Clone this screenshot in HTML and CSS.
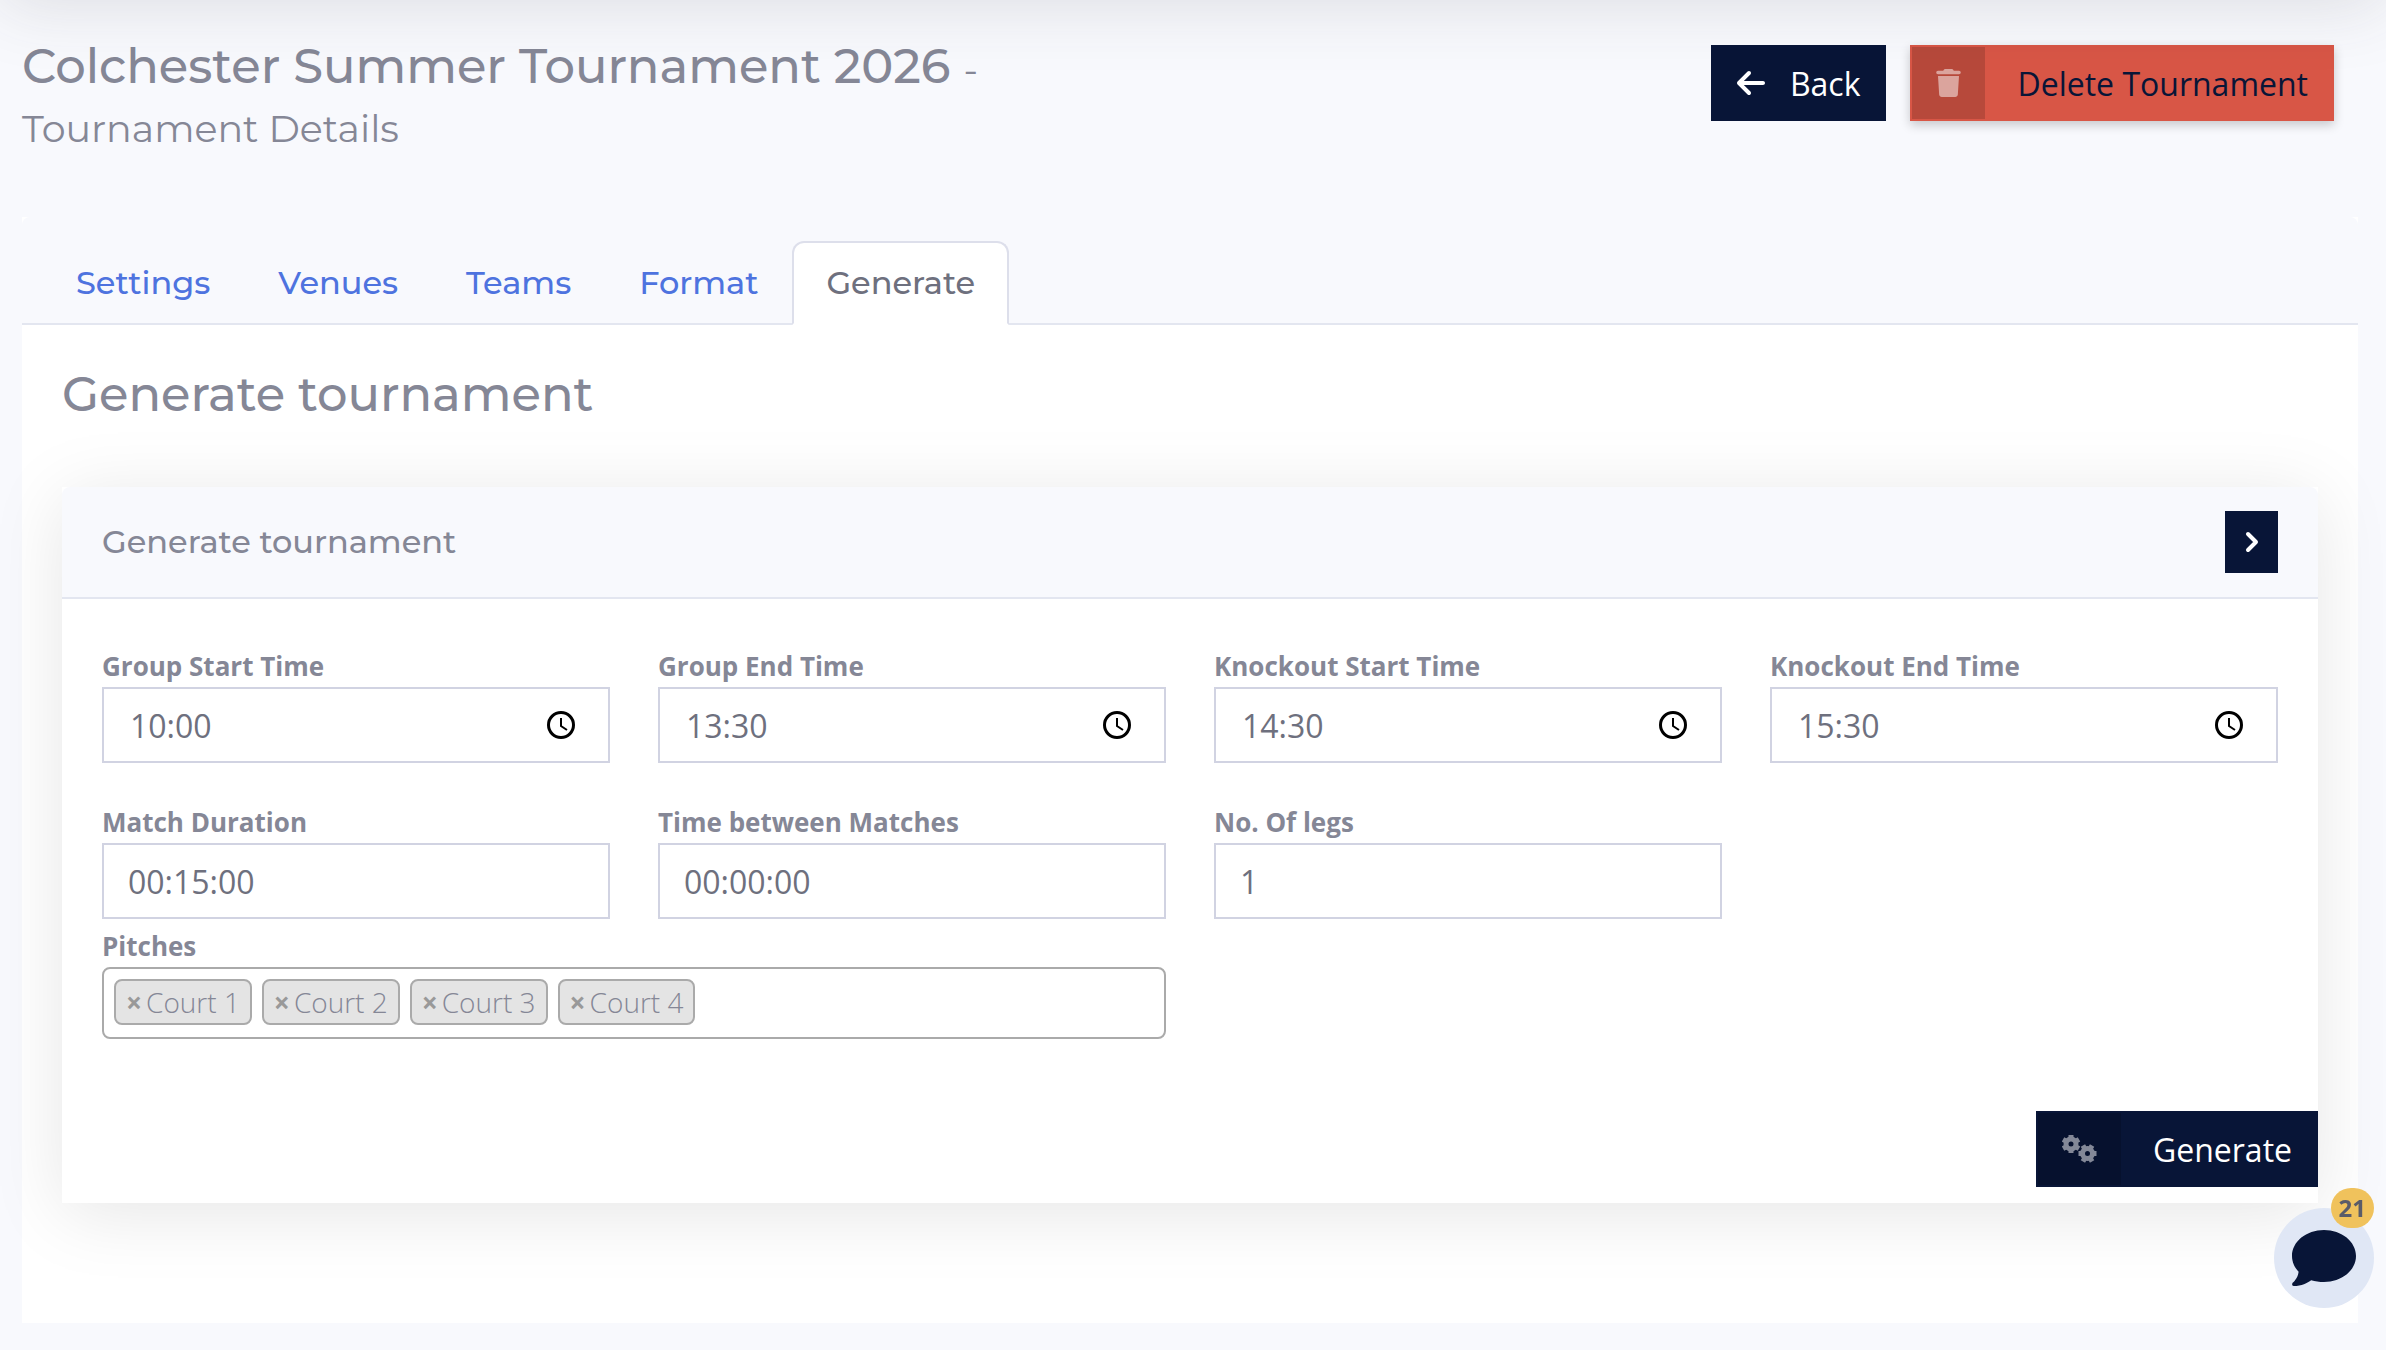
FILE: index.html
```html
<!DOCTYPE html>
<html lang="en">
<head>
  <meta charset="UTF-8">
  <meta name="viewport" content="width=device-width, initial-scale=1.0">
  <title>Tournament Details</title>
  <link rel="stylesheet" href="styles.css">
</head>
<body>
  <div class="topbar"></div>

  <header class="page-header">
    <div class="page-title">
      <h1>Colchester Summer Tournament 2026 <small>-</small></h1>
      <p>Tournament Details</p>
    </div>
    <div class="page-actions">
      <a href="#" class="btn btn-back">
        <svg viewBox="0 0 448 512" width="28" height="32" fill="currentColor"><path d="M9.400 233.400c-12.500 12.500-12.500 32.800 0 45.300l160 160c12.500 12.500 32.800 12.500 45.300 0s12.500-32.800 0-45.300L109.200 288 416 288c17.700 0 32-14.300 32-32s-14.300-32-32-32l-306.700 0L214.600 118.600c12.500-12.500 12.500-32.800 0-45.300s-32.800-12.500-45.300 0l-160 160z"/></svg>
        <span>Back</span>
      </a>
      <button type="button" class="btn btn-danger">
        <span class="btn-icon"><svg viewBox="0 0 448 512" width="25" height="28" fill="currentColor"><path d="M135.200 17.700C140.600 6.800 151.700 0 163.800 0L284.200 0c12.100 0 23.200 6.800 28.600 17.700L320 32l96 0c17.700 0 32 14.300 32 32s-14.300 32-32 32L32 96C14.300 96 0 81.700 0 64S14.300 32 32 32l96 0 7.200-14.300zM32 128l384 0L394.800 467c-1.600 25.300-22.600 45-47.900 45L101.100 512c-25.300 0-46.300-19.700-47.900-45L32 128z"/></svg></span>
        <span class="btn-text">Delete Tournament</span>
      </button>
    </div>
  </header>

  <main class="panel">
    <nav class="tabs">
      <a href="#" class="tab">Settings</a>
      <a href="#" class="tab">Venues</a>
      <a href="#" class="tab">Teams</a>
      <a href="#" class="tab">Format</a>
      <a href="#" class="tab active">Generate</a>
    </nav>

    <div class="panel-body">
      <h2>Generate tournament</h2>

      <form class="card">
        <div class="card-header">
          <h3>Generate tournament</h3>
          <button type="button" class="btn-next" aria-label="Next">
            <svg viewBox="0 0 16 24" width="16" height="24" fill="none" stroke="currentColor" stroke-width="4" stroke-linecap="round" stroke-linejoin="round"><path d="M4 4l8 8-8 8"/></svg>
          </button>
        </div>

        <div class="fields">
          <div class="field">
            <label for="groupStart">Group Start Time</label>
            <div class="control control-time">
              <input type="text" id="groupStart" value="10:00">
              <button type="button" class="clock" aria-label="Pick time"><svg viewBox="0 0 30 30" width="30" height="30" fill="none" stroke="currentColor"><circle cx="15" cy="15" r="12.500" stroke-width="3"/><path d="M15 8v8l6 4" stroke-width="2"/></svg></button>
            </div>
          </div>
          <div class="field">
            <label for="groupEnd">Group End Time</label>
            <div class="control control-time">
              <input type="text" id="groupEnd" value="13:30">
              <button type="button" class="clock" aria-label="Pick time"><svg viewBox="0 0 30 30" width="30" height="30" fill="none" stroke="currentColor"><circle cx="15" cy="15" r="12.500" stroke-width="3"/><path d="M15 8v8l6 4" stroke-width="2"/></svg></button>
            </div>
          </div>
          <div class="field">
            <label for="knockoutStart">Knockout Start Time</label>
            <div class="control control-time">
              <input type="text" id="knockoutStart" value="14:30">
              <button type="button" class="clock" aria-label="Pick time"><svg viewBox="0 0 30 30" width="30" height="30" fill="none" stroke="currentColor"><circle cx="15" cy="15" r="12.500" stroke-width="3"/><path d="M15 8v8l6 4" stroke-width="2"/></svg></button>
            </div>
          </div>
          <div class="field">
            <label for="knockoutEnd">Knockout End Time</label>
            <div class="control control-time">
              <input type="text" id="knockoutEnd" value="15:30">
              <button type="button" class="clock" aria-label="Pick time"><svg viewBox="0 0 30 30" width="30" height="30" fill="none" stroke="currentColor"><circle cx="15" cy="15" r="12.500" stroke-width="3"/><path d="M15 8v8l6 4" stroke-width="2"/></svg></button>
            </div>
          </div>
          <div class="field">
            <label for="duration">Match Duration</label>
            <div class="control"><input type="text" id="duration" value="00:15:00"></div>
          </div>
          <div class="field">
            <label for="between">Time between Matches</label>
            <div class="control"><input type="text" id="between" value="00:00:00"></div>
          </div>
          <div class="field">
            <label for="legs">No. Of legs</label>
            <div class="control"><input type="text" id="legs" value="1"></div>
          </div>
          <div class="field field-pitches">
            <label for="pitches">Pitches</label>
            <div class="pitches">
              <span class="chip"><button type="button" aria-label="Remove Court 1">×</button>Court 1</span>
              <span class="chip"><button type="button" aria-label="Remove Court 2">×</button>Court 2</span>
              <span class="chip"><button type="button" aria-label="Remove Court 3">×</button>Court 3</span>
              <span class="chip"><button type="button" aria-label="Remove Court 4">×</button>Court 4</span>
              <input type="text" id="pitches">
            </div>
          </div>
        </div>

        <div class="card-footer">
          <button type="submit" class="btn btn-generate">
            <span class="btn-icon"><svg viewBox="0 0 35 28" width="35" height="28" fill="none" stroke="currentColor">
              <g transform="translate(9 9)"><circle r="5" stroke-width="5"/><path d="M0-6v-3M0 6v3M5.200-3l2.800-1.600M5.200 3l2.800 1.600M-5.200-3l-2.800-1.600M-5.200 3l-2.800 1.600" stroke-width="5"/></g>
              <g transform="translate(25.500 18.500)"><circle r="5" stroke-width="5"/><path d="M-6 0h-3M6 0h3M-3 5.200l-1.600 2.800M3 5.200l1.600 2.800M-3-5.200l-1.600-2.800M3-5.200l1.600-2.800" stroke-width="5"/></g>
            </svg></span>
            <span class="btn-text">Generate</span>
          </button>
        </div>
      </form>
    </div>
  </main>

  <button type="button" class="chat" aria-label="Open chat">
    <svg viewBox="0 0 512 448" width="64" height="56" fill="currentColor"><path d="M256 0C114.600 0 0 93.100 0 208c0 47.600 19.900 91.200 52.900 126.300C48 386 9.600 420 4 424c-5 8-5 24 10 24 62 0 110-26 139.300-46.600C184.700 411.200 219.600 416 256 416c141.400 0 256-93.100 256-208S397.400 0 256 0z"/></svg>
    <span class="chat-badge">21</span>
  </button>
</body>
</html>
```
FILE: styles.css
```css
* {
  box-sizing: border-box;
}
body {
  margin: 0;
  min-height: 100vh;
  padding: 32px 28px 26px 22px;
  background-color: #f8f9fd;
  color: #858796;
  font-family: "Open Sans", sans-serif;
  font-size: 32px;
  position: relative;
  overflow-x: hidden;
}
h1, h2, h3, p {
  margin: 0;
}
h1, h2, h3, .page-title, .tab {
  font-family: Montserrat, Inter, sans-serif;
  font-weight: 500;
}
button, input {
  font: inherit;
  color: inherit;
}
button {
  border: 0;
  padding: 0;
  background: none;
  cursor: pointer;
}
svg {
  display: block;
}

/* shadow of the bar above the page */
.topbar {
  position: absolute;
  top: -100px;
  left: 0;
  right: 0;
  height: 100px;
  box-shadow: 0 4px 70px rgba(58, 59, 69, 0.15);
}

.page-header {
  display: flex;
  justify-content: space-between;
  align-items: flex-start;
  height: 185px;
}
h1 {
  font-size: 48px;
  line-height: 68px;
}
h1 small {
  font-size: 38px;
  font-weight: 400;
}
.page-title p {
  font-size: 38px;
  font-weight: 400;
  line-height: 50px;
}
.page-actions {
  display: flex;
  gap: 24px;
  padding: 13px 24px 0 0;
}

.btn {
  display: flex;
  align-items: center;
  height: 76px;
  padding: 2px;
  background-color: #081537;
  color: #fff;
  font-size: 32px;
  text-decoration: none;
}
.btn-back {
  gap: 25px;
  padding: 0 26px;
}
.btn-icon {
  display: flex;
  align-items: center;
  align-self: stretch;
  padding: 0 24px;
  background-color: rgba(0, 0, 0, 0.15);
}
.btn-icon svg {
  opacity: 0.5;
}
.btn-text {
  padding: 0 24px 0 32px;
}
.btn-danger {
  background-color: #d85646;
  color: #081537;
  box-shadow: 0 4px 10px rgba(0, 0, 0, 0.2);
}
.btn-danger .btn-icon {
  color: #fff;
}

.panel {
  background-color: #fff;
}
.tabs {
  display: flex;
  padding: 24px 40px 0 20px;
  height: 108px;
  background-color: #f8f9fd;
  border-bottom: 2px solid #e3e6f0;
  border-radius: 8px 8px 0 0;
}
.tab {
  height: 84px;
  padding: 0 32px;
  border: 2px solid transparent;
  border-radius: 12px 12px 0 0;
  color: #4e73df;
  font-size: 32px;
  line-height: 80px;
  text-decoration: none;
}
.tab.active {
  background-color: #fff;
  border-color: #dddfeb;
  border-bottom-color: #fff;
  color: #6e707e;
}
.panel-body {
  padding: 40px 40px 120px;
}
h2 {
  font-size: 48px;
  line-height: 58px;
  margin-bottom: 64px;
}

.card {
  background-color: #fff;
  box-shadow: 0 10px 70px rgba(0, 0, 0, 0.1);
}
.card-header {
  display: flex;
  justify-content: space-between;
  align-items: center;
  height: 112px;
  padding: 0 40px;
  background-color: #f8f9fd;
  border-bottom: 2px solid #e3e6f0;
  border-radius: 8px 8px 0 0;
}
h3 {
  font-size: 32px;
  line-height: 38px;
}
.btn-next {
  display: flex;
  align-items: center;
  justify-content: center;
  width: 53px;
  height: 62px;
  background-color: #081537;
  color: #fff;
}

.fields {
  display: grid;
  grid-template-columns: repeat(4, 1fr);
  column-gap: 48px;
  padding: 48px 40px 0;
}
.field {
  margin-bottom: 40px;
}
.field:nth-child(n + 5) {
  margin-bottom: 8px;
}
label {
  display: block;
  height: 40px;
  font-size: 26px;
  font-weight: 700;
  line-height: 38px;
}
.control {
  display: flex;
  align-items: center;
  height: 76px;
  padding: 0 24px;
  border: 2px solid #d1d3e2;
  color: #6e707e;
}
.control-time {
  padding: 0 32px 0 26px;
}
.control input, .pitches input {
  flex: 1;
  min-width: 0;
  padding: 0;
  border: 0;
  outline: 0;
  background: none;
}
.clock {
  color: #000;
}
.field-pitches {
  grid-column: 1 / span 2;
}
.pitches {
  display: flex;
  gap: 10px;
  height: 72px;
  padding: 10px;
  border: 2px solid #aaa;
  border-radius: 8px;
}
.chip {
  display: flex;
  align-items: center;
  gap: 4px;
  height: 46px;
  padding: 0 10px;
  background-color: #e4e4e4;
  border: 2px solid #aaa;
  border-radius: 8px;
  font-size: 28px;
  font-weight: 300;
}
.chip button {
  color: #999;
  font-size: 28px;
  font-weight: 700;
  line-height: 40px;
}

.card-footer {
  display: flex;
  justify-content: flex-end;
  padding: 64px 0 16px;
}

.chat {
  position: fixed;
  right: 12px;
  bottom: 42px;
  display: flex;
  align-items: center;
  justify-content: center;
  width: 100px;
  height: 100px;
  border-radius: 50%;
  background-color: #e0e7f5;
  color: #081537;
}
.chat-badge {
  position: absolute;
  top: -20px;
  right: 0;
  padding: 0 8px;
  border-radius: 20px;
  background-color: #f0c25c;
  color: #5a5c69;
  font-size: 24px;
  font-weight: 700;
  line-height: 40px;
}
```
